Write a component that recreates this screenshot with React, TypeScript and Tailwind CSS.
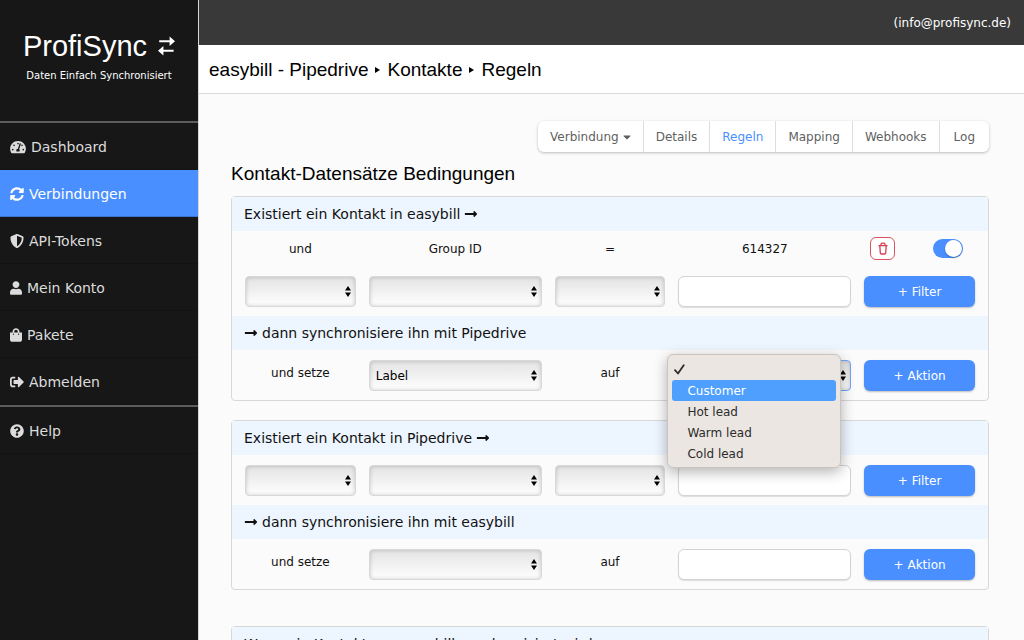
import type { ReactNode } from 'react'
import {
  FaTachometerAlt,
  FaSyncAlt,
  FaShieldAlt,
  FaUser,
  FaShoppingBag,
  FaSignOutAlt,
  FaQuestionCircle,
  FaLongArrowAltRight,
  FaCaretDown,
} from 'react-icons/fa'

const mainNav = [
  { label: 'Dashboard', icon: FaTachometerAlt, iconWidth: 'w-4', active: false },
  { label: 'Verbindungen', icon: FaSyncAlt, iconWidth: 'w-3.5', active: true },
  { label: 'API-Tokens', icon: FaShieldAlt, iconWidth: 'w-3.5', active: false },
  { label: 'Mein Konto', icon: FaUser, iconWidth: 'w-3', active: false },
  { label: 'Pakete', icon: FaShoppingBag, iconWidth: 'w-3', active: false },
  { label: 'Abmelden', icon: FaSignOutAlt, iconWidth: 'w-3.5', active: false },
]

const helpNav = [{ label: 'Help', icon: FaQuestionCircle, iconWidth: 'w-3.5', active: false }]

const tabs = ['Details', 'Regeln', 'Mapping', 'Webhooks', 'Log']

const labelOptions = ['Customer', 'Hot lead', 'Warm lead', 'Cold lead']

function Nav({ items }: { items: typeof mainNav }) {
  return (
    <nav className="border-t-2 border-[#5d5d5d]">
      {items.map(({ label, icon: Icon, iconWidth, active }) => (
        <a
          key={label}
          href="#"
          className={`flex h-[47px] items-center gap-[5px] border-b px-2.5 pt-0.5 text-sm ${
            active ? 'border-[#3c74d2] bg-[#4a8fff] text-white' : 'border-[#131313] text-[#dcdcdc]'
          }`}
        >
          <Icon className={`h-3.5 ${iconWidth}`} />
          {label}
        </a>
      ))}
    </nav>
  )
}

function Sidebar() {
  return (
    <aside className="w-[198px] shrink-0 bg-[#171717]">
      <div className="flex h-[121px] flex-col items-center pt-7 text-white">
        <div className="flex items-center gap-[11px] font-['Liberation_Sans',sans-serif] text-[29px] leading-9">
          ProfiSync
          <svg viewBox="0 0 17 20" className="h-5 w-[17px]" fill="currentColor" aria-hidden="true">
            <path d="M1.2 4.3H11.6V0.6L17 5.3L11.6 10V6.3H1.2zM15.6 13.7H5.4V10L0 14.7L5.4 19.4V15.7H15.6z" />
          </svg>
        </div>
        <p className="mt-1 text-[10px] leading-4 whitespace-nowrap">Daten Einfach Synchronisiert</p>
      </div>
      <Nav items={mainNav} />
      <Nav items={helpNav} />
    </aside>
  )
}

function Tabs() {
  return (
    <nav className="flex overflow-hidden rounded-md bg-white text-xs text-[#5f5f5f] shadow-[0_1px_3px_rgba(0,0,0,0.25)]">
      <button className="flex h-[31px] items-center gap-1 px-3">
        Verbindung <FaCaretDown className="h-3 w-2" />
      </button>
      {tabs.map(tab => (
        <a
          key={tab}
          href="#"
          className={`flex h-[31px] items-center border-l border-[#dedede] px-3 last:px-3.5 ${tab === 'Regeln' ? 'text-[#4a8fff]' : ''}`}
        >
          {tab}
        </a>
      ))}
    </nav>
  )
}

function Select({ label, value = '', focused }: { label: string; value?: string; focused?: boolean }) {
  return (
    <div className="relative">
      <select
        aria-label={label}
        defaultValue={value}
        className={`block h-[31px] w-full appearance-none rounded border bg-linear-to-b from-[#e3e3e3] to-white px-1.5 text-xs text-black shadow-[inset_0_0_4px_rgba(0,0,0,0.2)] ${
          focused ? 'border-[#6fa5fb]' : 'border-[#d8d8d8]'
        }`}
      >
        <option value={value}>{value}</option>
      </select>
      <svg viewBox="0 0 6 11" className="pointer-events-none absolute top-2.5 right-[5px] h-[11px] w-1.5" aria-hidden="true">
        <path d="M3 0L6 4.6H0zM3 11L0 6.4H6z" />
      </svg>
    </div>
  )
}

function TextInput({ label }: { label: string }) {
  return (
    <input
      type="text"
      aria-label={label}
      className="block h-[31px] w-full rounded-md border border-[#d4d4d4] bg-white px-2 text-xs shadow-[0_1px_1px_rgba(0,0,0,0.12)]"
    />
  )
}

function AddButton({ children }: { children: ReactNode }) {
  return (
    <button className="h-[31px] w-full rounded-md bg-[#4a8fff] text-xs text-white shadow-[0_1px_2px_rgba(0,0,0,0.25)]">
      + {children}
    </button>
  )
}

function Band({ children }: { children: ReactNode }) {
  return (
    <h3 className="flex h-[34px] items-center gap-1 bg-[#edf5ff] px-3 text-sm text-[#111]">{children}</h3>
  )
}

function Arrow() {
  return <FaLongArrowAltRight className="h-3.5 w-3.5" />
}

function Card({ children }: { children: ReactNode }) {
  return <section className="rounded border border-[#d8d8d8]">{children}</section>
}

function Row({ children }: { children: ReactNode }) {
  return <div className="grid h-[50px] grid-cols-12 gap-x-[13px] px-[13px] pt-2.5 text-xs">{children}</div>
}

function FilterRow() {
  return (
    <Row>
      <div className="col-span-2"><Select label="Verknüpfung" /></div>
      <div className="col-span-3"><Select label="Feld" /></div>
      <div className="col-span-2"><Select label="Operator" /></div>
      <div className="col-span-3"><TextInput label="Wert" /></div>
      <div className="col-span-2"><AddButton>Filter</AddButton></div>
    </Row>
  )
}

function ActionRow({ field, children }: { field?: string; children: ReactNode }) {
  return (
    <Row>
      <div className="col-span-2 pt-[5px] text-center">und setze</div>
      <div className="col-span-3"><Select label="Zielfeld" value={field} /></div>
      <div className="col-span-2 pt-[5px] text-center">auf</div>
      <div className="relative col-span-3">{children}</div>
      <div className="col-span-2"><AddButton>Aktion</AddButton></div>
    </Row>
  )
}

function ActiveFilter() {
  return (
    <div className="grid h-[35px] grid-cols-12 items-center gap-x-[13px] px-[13px] text-center text-xs">
      <div className="col-span-2">und</div>
      <div className="col-span-3">Group ID</div>
      <div className="col-span-2">=</div>
      <div className="col-span-3">614327</div>
      <div className="col-span-2 flex items-center justify-between pr-3 pl-1.5">
        <button
          aria-label="Filter löschen"
          className="flex h-[23px] w-[25px] items-center justify-center rounded-md border border-[#dc5260] bg-white text-[#d93b4c]"
        >
          <svg viewBox="0 0 10 13" className="h-[13px] w-2.5" fill="none" stroke="currentColor" aria-hidden="true">
            <path
              d="M0.5 3.6H9.5M3 3.4V2.6Q3 1.2 4.2 1.2H5.8Q7 1.2 7 2.6V3.4M1.8 3.8L2.3 11Q2.4 12 3.4 12H6.6Q7.6 12 7.7 11L8.2 3.8"
              strokeWidth="1.3"
            />
          </svg>
        </button>
        <label className="relative">
          <input type="checkbox" defaultChecked aria-label="Filter aktiv" className="peer sr-only" />
          <span className="flex h-[19px] w-[30px] justify-end rounded-full bg-[#4a8fff] p-px">
            <span className="size-[17px] rounded-full bg-white shadow-[0_1px_2px_rgba(0,0,0,0.3)]" />
          </span>
        </label>
      </div>
    </div>
  )
}

function LabelMenu() {
  return (
    <div
      role="listbox"
      aria-label="Label"
      className="absolute -top-1.5 right-2.5 -left-[11px] z-10 rounded-md border border-[#c9c4c0] bg-[#ebe6e2] px-1 pt-1 pb-[3px] text-xs text-[#2c2c2c] shadow-[0_4px_14px_rgba(0,0,0,0.3)]"
    >
      <div role="option" aria-selected="true" className="flex h-[21px] items-center pl-0.5">
        <svg viewBox="0 0 11 11" className="size-[11px]" fill="none" stroke="currentColor" strokeWidth="1.8" aria-hidden="true">
          <path d="M1 6.2L4 9.5L9.7 1.2" strokeLinecap="round" strokeLinejoin="round" />
        </svg>
      </div>
      {labelOptions.map((option, i) => (
        <div
          key={option}
          role="option"
          aria-selected="false"
          className={`flex h-[21px] items-center rounded-[3px] px-[15px] ${i === 0 ? 'bg-[#4f9fff] text-white' : ''}`}
        >
          {option}
        </div>
      ))}
    </div>
  )
}

export default function App() {
  return (
    <div className="flex h-screen overflow-hidden bg-[#fbfbfb] font-['DejaVu_Sans',sans-serif] text-[#111]">
      <Sidebar />
      <div className="min-w-0 flex-1 border-l border-[#d8d8d8]">
        <header className="flex h-[45px] items-center justify-end bg-[#393939] px-[13px] text-xs text-white">
          (info@profisync.de)
        </header>
        <div className="flex h-[49px] items-center border-b border-[#dadada] bg-white px-2.5 pt-0.5">
          <h1 className="flex items-center gap-[7px] font-['Liberation_Sans',sans-serif] text-[19px] text-black">
            easybill - Pipedrive
            <Crumb />
            Kontakte
            <Crumb />
            Regeln
          </h1>
        </div>
        <main className="pt-[27px] pr-[35px] pl-8">
          <div className="flex justify-end">
            <Tabs />
          </div>
          <h2 className="mt-[9px] mb-[9px] font-['Liberation_Sans',sans-serif] text-[19px] leading-[26px] text-black">
            Kontakt-Datensätze Bedingungen
          </h2>
          <Card>
            <Band>Existiert ein Kontakt in easybill <Arrow /></Band>
            <ActiveFilter />
            <FilterRow />
            <Band><Arrow /> dann synchronisiere ihn mit Pipedrive</Band>
            <ActionRow field="Label">
              <Select label="Wert" focused />
              <LabelMenu />
            </ActionRow>
          </Card>
          <div className="mt-[19px]">
            <Card>
              <Band>Existiert ein Kontakt in Pipedrive <Arrow /></Band>
              <FilterRow />
              <Band><Arrow /> dann synchronisiere ihn mit easybill</Band>
              <ActionRow>
                <TextInput label="Wert" />
              </ActionRow>
            </Card>
          </div>
          <div className="mt-9">
            <Card>
              <Band>Wenn ein Kontakt von easybill synchronisiert wird</Band>
            </Card>
          </div>
        </main>
      </div>
    </div>
  )
}

function Crumb() {
  return (
    <svg viewBox="0 0 5 6" className="h-1.5 w-[5px]" aria-hidden="true">
      <path d="M0 0L5 3L0 6z" />
    </svg>
  )
}
